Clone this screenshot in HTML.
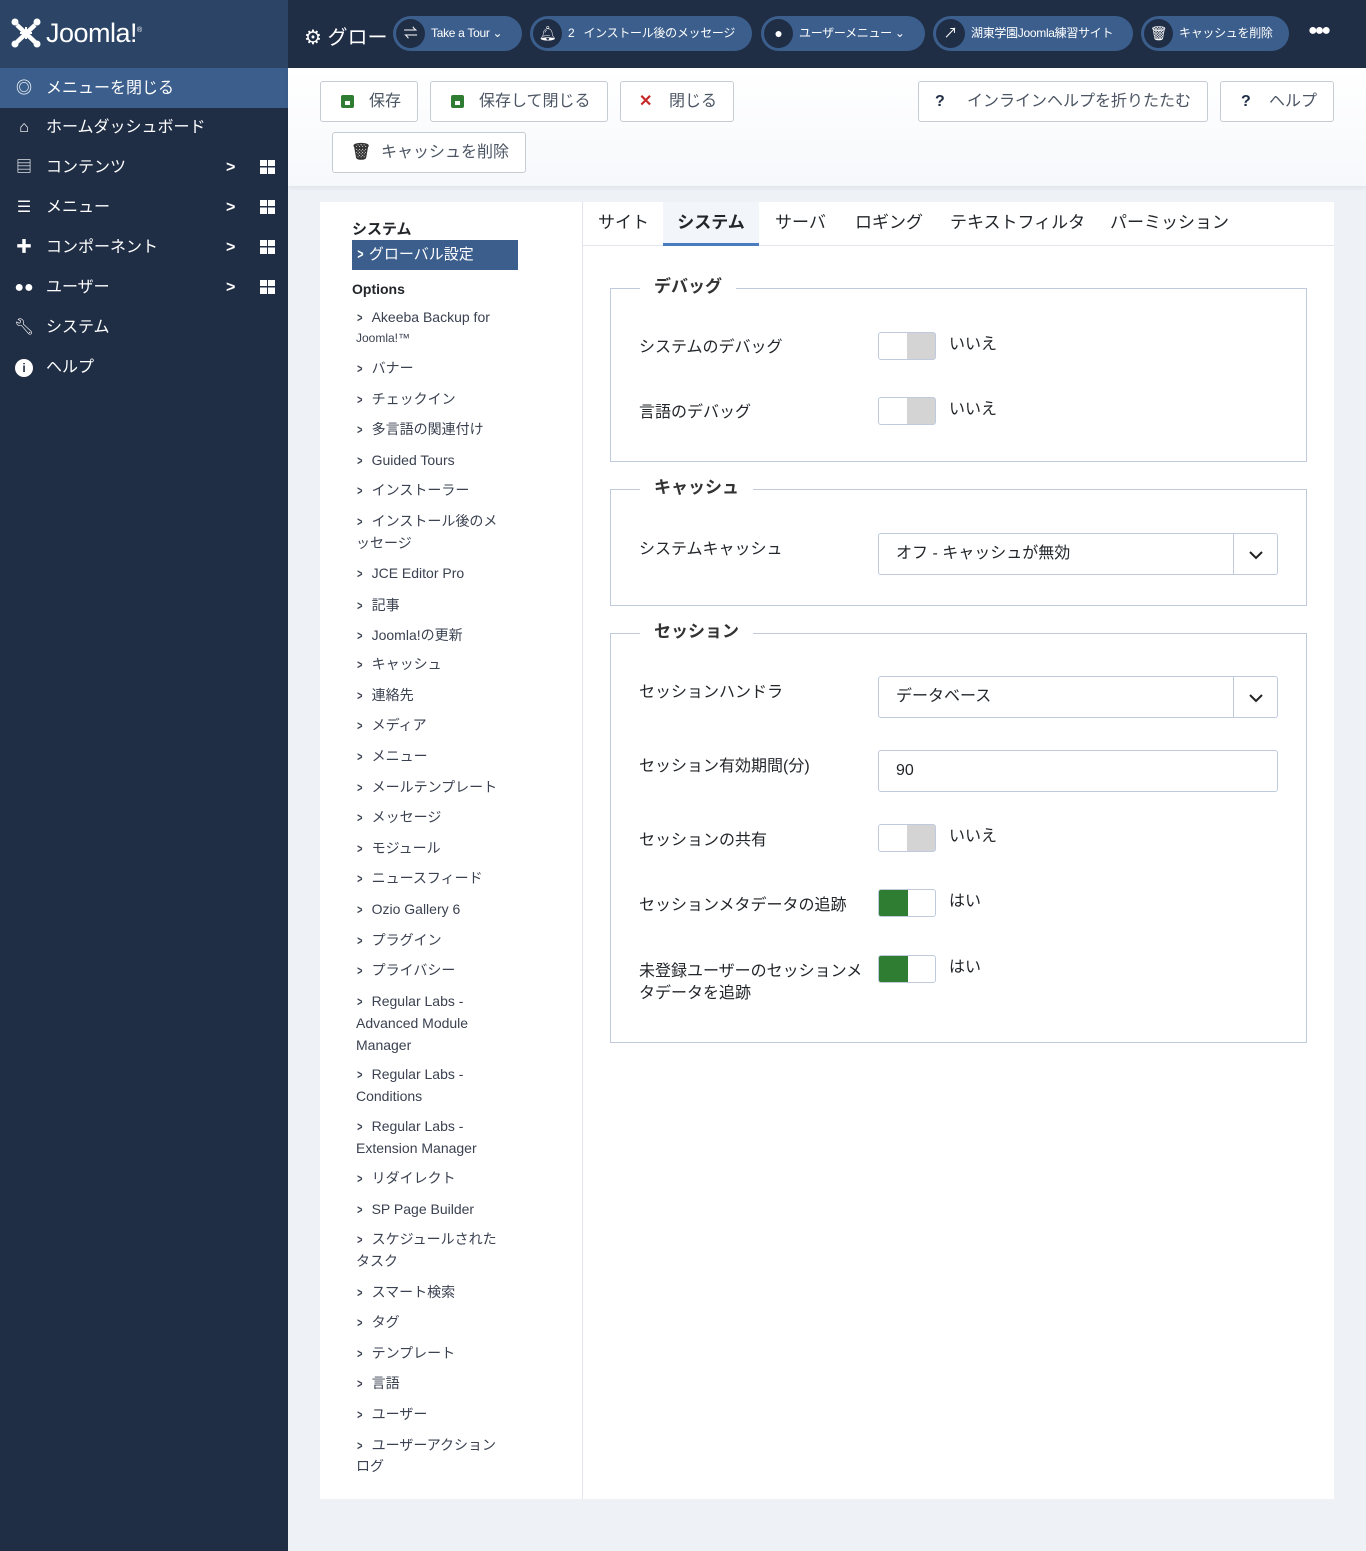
<!DOCTYPE html>
<html><head><meta charset="utf-8">
<style>
*{box-sizing:border-box;margin:0;padding:0}
body{width:1366px;height:1551px;position:relative;background:#eef2f7;font-family:"Liberation Sans","Noto Sans CJK JP",sans-serif;color:#22262a;overflow:hidden}
.a{position:absolute;white-space:nowrap}
#side{position:absolute;left:0;top:0;width:288px;height:1551px;background:#1f2d45}
#logo{position:absolute;left:0;top:0;width:288px;height:68px;background:#2c4566}
.sn{position:absolute;left:0;width:288px;height:40px;color:#fff;font-size:16px;line-height:42px}
.sn .ic{position:absolute;left:12px;top:0;width:24px;text-align:center}
.sn .t{position:absolute;left:46px}
.sn .ch{position:absolute;left:226px;font-weight:bold}
.sn .gr{position:absolute;left:260px;top:13px;width:15px;height:14px;background:
linear-gradient(#1f2d45,#1f2d45) 7px 0/1px 14px no-repeat,linear-gradient(#1f2d45,#1f2d45) 0 6px/15px 1.5px no-repeat,#fff}
#top{position:absolute;left:288px;top:0;width:1078px;height:68px;background:#1f2d45}
.pill{position:absolute;top:16px;height:35px;border-radius:18px;background:#3b5e8c;color:#fff;font-size:12px;line-height:35px;padding-left:38px;padding-right:8px;white-space:nowrap;overflow:hidden;letter-spacing:-0.3px}
.pill .c{position:absolute;left:3px;top:3px;width:29px;height:29px;border-radius:50%;background:#1f2d45;text-align:center;line-height:29px;font-size:14px}
#tool{position:absolute;left:288px;top:68px;width:1078px;height:118px;background:linear-gradient(#fff,#f6f8fb);box-shadow:0 2px 4px rgba(0,0,0,.06)}
.btn{position:absolute;height:41px;border:1px solid #c6ccd4;border-radius:3px;background:#fff;font-size:16px;color:#4b5563;line-height:39px}
.btn b{position:absolute;font-weight:bold}
.fl{position:absolute;left:20px;top:13px;width:13px;height:13px;background:#2e7d32;border-radius:2px}
.fl:after{content:"";position:absolute;left:4px;top:6px;width:5px;height:4px;background:#fff}
#card{position:absolute;left:320px;top:202px;width:1014px;height:1297px;background:#fff}
.ln{position:absolute;left:356px;font-size:14px;line-height:20px;color:#3a4150;white-space:nowrap}
.ln i{font-style:normal;font-weight:bold;margin-right:8px;font-size:13px;display:inline-block;transform:scaleX(.7)}
.tab{position:absolute;top:202px;height:44px;line-height:42px;font-size:17px;color:#22262a}
fieldset{position:absolute;left:610px;width:697px;border:1px solid #bfcbdd}
.lg{position:absolute;left:640px;background:#fff;padding:0 14px;font-size:17px;font-weight:bold;color:#333;line-height:22px}
.lab{position:absolute;left:639px;font-size:16px;line-height:22px;color:#22262a}
.tg{position:absolute;left:878px;width:58px;height:28px;border:1px solid #bfcbdd;border-radius:3px;background:linear-gradient(90deg,#fff 50%,#d4d4d4 50%)}
.tg.on{background:linear-gradient(90deg,#2e7d32 52%,#fff 52%)}
.tv{position:absolute;left:949px;font-size:16px;color:#22262a;line-height:20px}
.sel{position:absolute;left:878px;width:400px;height:42px;border:1px solid #bfcbdd;border-radius:3px;font-size:16px;line-height:40px;padding-left:17px}
.sel .dd{position:absolute;right:0;top:0;width:44px;height:40px;border-left:1px solid #bfcbdd}
</style></head><body>
<div id="side">
<div id="logo">
<svg class="a" style="left:11px;top:18px" width="30" height="30" viewBox="0 0 30 30"><g fill="#fff"><circle cx="4" cy="4" r="3.5"/><circle cx="26" cy="4" r="3.5"/><circle cx="4" cy="26" r="3.5"/><circle cx="26" cy="26" r="3.5"/></g><g stroke="#fff" stroke-width="4.5" fill="none"><path d="M6 7 L24 24"/><path d="M24 7 L6 24"/><path d="M9 15h12M15 9v12" stroke-width="2"/></g></svg>
<div class="a" style="left:46px;top:18px;font-size:27px;color:#fff;letter-spacing:-0.5px">Joomla!<sup style="font-size:7px">®</sup></div>
</div>
<div class="sn" style="top:68px;background:#3b5e8c"><span class="ic" style="font-weight:bold">◎</span><span class="t">メニューを閉じる</span></div>
<div class="sn" style="top:107px"><span class="ic">⌂</span><span class="t">ホームダッシュボード</span></div>
<div class="sn" style="top:147px"><span class="ic">▤</span><span class="t">コンテンツ</span><span class="ch">&gt;</span><span class="gr"></span></div>
<div class="sn" style="top:187px"><span class="ic">☰</span><span class="t">メニュー</span><span class="ch">&gt;</span><span class="gr"></span></div>
<div class="sn" style="top:227px"><span class="ic">✚</span><span class="t">コンポーネント</span><span class="ch">&gt;</span><span class="gr"></span></div>
<div class="sn" style="top:267px"><span class="ic">●●</span><span class="t">ユーザー</span><span class="ch">&gt;</span><span class="gr"></span></div>
<div class="sn" style="top:307px"><span class="ic">🔧︎</span><span class="t">システム</span></div>
<div class="sn" style="top:347px"><span class="ic"><span style="display:inline-block;width:18px;height:18px;border-radius:50%;background:#fff;color:#1f2d45;font-size:12px;line-height:18px;font-weight:bold;vertical-align:middle">i</span></span><span class="t">ヘルプ</span></div>
</div>
<div id="top">
<div class="a" style="left:16px;top:21px;color:#fff;font-size:20px">⚙ グロー</div>
<div class="pill" style="left:105px;width:129px"><span class="c">⇌</span>Take a Tour ⌄</div>
<div class="pill" style="left:242px;width:222px"><span class="c">🔔︎</span>2&nbsp;&nbsp;&nbsp;インストール後のメッセージ</div>
<div class="pill" style="left:473px;width:164px"><span class="c">●</span>ユーザーメニュー ⌄</div>
<div class="pill" style="left:645px;width:200px"><span class="c">↗</span>湖東学園Joomla練習サイト</div>
<div class="pill" style="left:853px;width:148px"><span class="c">🗑︎</span>キャッシュを削除</div>
<div class="a" style="left:1020px;top:22px;color:#fff;font-size:16px;letter-spacing:-3px">●●●</div>
</div>
<div id="tool">
<div class="btn" style="left:32px;top:13px;width:98px"><span class="fl"></span><span style="position:absolute;left:48px">保存</span></div>
<div class="btn" style="left:142px;top:13px;width:178px"><span class="fl"></span><span style="position:absolute;left:48px">保存して閉じる</span></div>
<div class="btn" style="left:332px;top:13px;width:114px"><b style="left:18px;color:#c62828">✕</b><span style="position:absolute;left:48px">閉じる</span></div>
<div class="btn" style="left:630px;top:13px;width:290px"><b style="left:16px;color:#1f2d45">?</b><span style="position:absolute;left:48px">インラインヘルプを折りたたむ</span></div>
<div class="btn" style="left:932px;top:13px;width:114px"><b style="left:20px;color:#1f2d45">?</b><span style="position:absolute;left:48px">ヘルプ</span></div>
<div class="btn" style="left:44px;top:64px;width:194px"><b style="left:18px;color:#333">🗑︎</b><span style="position:absolute;left:48px">キャッシュを削除</span></div>
</div>
<div id="card"></div>
<div class="a" style="left:582px;top:202px;width:1px;height:1297px;background:#e2e6ec"></div>
<div class="a" style="left:352px;top:218px;font-size:15px;font-weight:bold">システム</div>
<div class="a" style="left:352px;top:240px;width:166px;height:30px;background:#3b5e8c;color:#fff;font-size:15px;line-height:30px;padding-left:4px"><b style="display:inline-block;transform:scaleX(.7)">&gt;</b> グローバル設定</div>
<div class="a" style="left:352px;top:281px;font-size:14px;font-weight:bold">Options</div>
<div class="ln" style="top:307px"><i>&gt;</i>Akeeba Backup for</div>
<div class="ln" style="top:328px;font-size:12px">Joomla!™</div>
<div class="ln" style="top:358px"><i>&gt;</i>バナー</div>
<div class="ln" style="top:389px"><i>&gt;</i>チェックイン</div>
<div class="ln" style="top:419px"><i>&gt;</i>多言語の関連付け</div>
<div class="ln" style="top:450px"><i>&gt;</i>Guided Tours</div>
<div class="ln" style="top:480px"><i>&gt;</i>インストーラー</div>
<div class="ln" style="top:511px"><i>&gt;</i>インストール後のメ</div>
<div class="ln" style="top:533px">ッセージ</div>
<div class="ln" style="top:563px"><i>&gt;</i>JCE Editor Pro</div>
<div class="ln" style="top:595px"><i>&gt;</i>記事</div>
<div class="ln" style="top:625px"><i>&gt;</i>Joomla!の更新</div>
<div class="ln" style="top:654px"><i>&gt;</i>キャッシュ</div>
<div class="ln" style="top:685px"><i>&gt;</i>連絡先</div>
<div class="ln" style="top:715px"><i>&gt;</i>メディア</div>
<div class="ln" style="top:746px"><i>&gt;</i>メニュー</div>
<div class="ln" style="top:777px"><i>&gt;</i>メールテンプレート</div>
<div class="ln" style="top:807px"><i>&gt;</i>メッセージ</div>
<div class="ln" style="top:838px"><i>&gt;</i>モジュール</div>
<div class="ln" style="top:868px"><i>&gt;</i>ニュースフィード</div>
<div class="ln" style="top:899px"><i>&gt;</i>Ozio Gallery 6</div>
<div class="ln" style="top:930px"><i>&gt;</i>プラグイン</div>
<div class="ln" style="top:960px"><i>&gt;</i>プライバシー</div>
<div class="ln" style="top:991px"><i>&gt;</i>Regular Labs -</div>
<div class="ln" style="top:1013px">Advanced Module</div>
<div class="ln" style="top:1035px">Manager</div>
<div class="ln" style="top:1064px"><i>&gt;</i>Regular Labs -</div>
<div class="ln" style="top:1086px">Conditions</div>
<div class="ln" style="top:1116px"><i>&gt;</i>Regular Labs -</div>
<div class="ln" style="top:1138px">Extension Manager</div>
<div class="ln" style="top:1168px"><i>&gt;</i>リダイレクト</div>
<div class="ln" style="top:1199px"><i>&gt;</i>SP Page Builder</div>
<div class="ln" style="top:1229px"><i>&gt;</i>スケジュールされた</div>
<div class="ln" style="top:1251px">タスク</div>
<div class="ln" style="top:1282px"><i>&gt;</i>スマート検索</div>
<div class="ln" style="top:1312px"><i>&gt;</i>タグ</div>
<div class="ln" style="top:1343px"><i>&gt;</i>テンプレート</div>
<div class="ln" style="top:1373px"><i>&gt;</i>言語</div>
<div class="ln" style="top:1404px"><i>&gt;</i>ユーザー</div>
<div class="ln" style="top:1435px"><i>&gt;</i>ユーザーアクション</div>
<div class="ln" style="top:1456px">ログ</div>

<div class="a" style="left:583px;top:245px;width:751px;height:1px;background:#e2e6ec"></div>
<div class="tab" style="left:598px">サイト</div>
<div class="tab" style="left:663px;width:96px;background:#f2f5f9;border-bottom:3px solid #4a7dbf;font-weight:bold;text-align:center">システム</div>
<div class="tab" style="left:775px">サーバ</div>
<div class="tab" style="left:855px">ロギング</div>
<div class="tab" style="left:950px">テキストフィルタ</div>
<div class="tab" style="left:1110px">パーミッション</div>

<fieldset style="top:288px;height:174px"></fieldset>
<div class="lg" style="top:276px">デバッグ</div>
<div class="lab" style="top:337px">システムのデバッグ</div><div class="tg" style="top:332px"></div><div class="tv" style="top:335px">いいえ</div>
<div class="lab" style="top:402px">言語のデバッグ</div><div class="tg" style="top:397px"></div><div class="tv" style="top:400px">いいえ</div>

<fieldset style="top:489px;height:117px"></fieldset>
<div class="lg" style="top:477px">キャッシュ</div>
<div class="lab" style="top:539px">システムキャッシュ</div>
<div class="sel" style="top:533px">オフ - キャッシュが無効<span class="dd"><svg width="44" height="40"><path d="M16 18l6 6 6-6" stroke="#222" stroke-width="2" fill="none"/></svg></span></div>

<fieldset style="top:633px;height:410px"></fieldset>
<div class="lg" style="top:621px">セッション</div>
<div class="lab" style="top:682px">セッションハンドラ</div>
<div class="sel" style="top:676px">データベース<span class="dd"><svg width="44" height="40"><path d="M16 18l6 6 6-6" stroke="#222" stroke-width="2" fill="none"/></svg></span></div>
<div class="lab" style="top:756px">セッション有効期間(分)</div>
<div class="sel" style="top:750px">90</div>
<div class="lab" style="top:830px">セッションの共有</div><div class="tg" style="top:824px"></div><div class="tv" style="top:827px">いいえ</div>
<div class="lab" style="top:895px">セッションメタデータの追跡</div><div class="tg on" style="top:889px"></div><div class="tv" style="top:892px">はい</div>
<div class="lab" style="top:961px">未登録ユーザーのセッションメ<br>タデータを追跡</div><div class="tg on" style="top:955px"></div><div class="tv" style="top:958px">はい</div>
</body></html>
